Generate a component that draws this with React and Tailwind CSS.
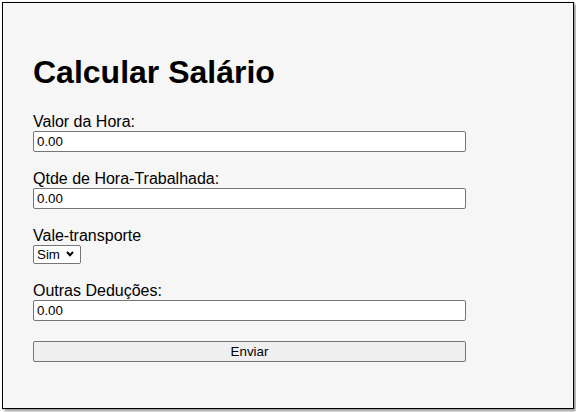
export default function App() {
  const inputCls =
    "block h-[21px] w-full rounded-[2px] border border-[#767676] bg-white px-[3px] text-[13.33px] leading-none text-black";
  return (
    <div className="h-[412px] w-[576px] bg-white p-[2px] font-['Liberation_Sans',Arial,sans-serif] text-black">
      <div className="h-[407px] w-[572px] border border-black bg-[#f6f6f6] p-[30px] shadow-[2px_2px_3px_rgba(0,0,0,0.45)]">
        <h1 className="mt-[21px] mb-[22px] text-[32px] font-bold leading-[37px]">Calcular Salário</h1>
        <form className="w-[433px]" onSubmit={(e) => e.preventDefault()}>
          <label className="block text-[16px] leading-[18px]">Valor da Hora:</label>
          <input className={inputCls} defaultValue="0.00" />
          <label className="mt-[18px] block text-[16px] leading-[18px]">Qtde de Hora-Trabalhada:</label>
          <input className={inputCls} defaultValue="0.00" />
          <label className="mt-[18px] block text-[16px] leading-[18px]">Vale-transporte</label>
          <div className="relative w-[48px]">
            <select className="block h-[19px] w-[48px] appearance-none rounded-[2px] border border-[#767676] bg-white pl-[3px] text-[13.33px] leading-none text-black">
              <option>Sim</option>
              <option>Não</option>
            </select>
            <svg className="pointer-events-none absolute right-[7px] top-[6px]" width="8" height="6" viewBox="0 0 8 6">
              <path d="M1 1 L4 4.2 L7 1" fill="none" stroke="#000" strokeWidth="2" />
            </svg>
          </div>
          <label className="mt-[18px] block text-[16px] leading-[18px]">Outras Deduções:</label>
          <input className={inputCls} defaultValue="0.00" />
          <button
            type="submit"
            className="mt-[20px] block h-[21px] w-full rounded-[2px] border border-[#767676] bg-[#efefef] text-[13.33px] leading-none text-black"
          >
            Enviar
          </button>
        </form>
      </div>
    </div>
  );
}
